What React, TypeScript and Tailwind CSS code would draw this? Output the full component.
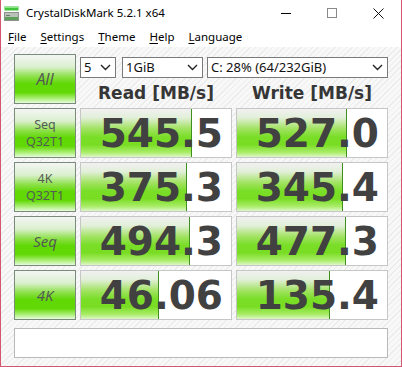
import React from "react";

const rows = [
  { top: "Seq", bottom: "Q32T1", read: "545.5", readFill: 111, write: "527.0", writeFill: 110 },
  { top: "4K", bottom: "Q32T1", read: "375.3", readFill: 106, write: "345.4", writeFill: 106 },
  { top: "Seq", bottom: "", read: "494.3", readFill: 109, write: "477.3", writeFill: 109 },
  { top: "4K", bottom: "", read: "46.06", readFill: 78, write: "135.4", writeFill: 93 },
];

const ui = "font-['Noto_Sans',sans-serif]";

function Chevron() {
  return (
    <svg width="11" height="7" viewBox="0 0 11 7" className="shrink-0">
      <polyline points="1,1 5.5,5.5 10,1" fill="none" stroke="#222" strokeWidth="1.4" />
    </svg>
  );
}

function Select({ label, width }: { label: string; width: string }) {
  return (
    <div
      className={`${width} h-[21px] bg-white border border-[#7a7a7a] flex items-center justify-between pl-[3px] pr-[4px] text-[13px] text-[#111] ${ui}`}
    >
      <span className="leading-none">{label}</span>
      <Chevron />
    </div>
  );
}

function LabelButton({ top, bottom }: { top: string; bottom: string }) {
  return (
    <div className="h-[50px] border border-[#7b8b7b] bg-[image:linear-gradient(to_bottom,#f4f5f4_0%,#dbf0cf_25%,#8ce048_45%,#60d804_60%,#62d906_78%,#a8ee70_90%,#e6fbdc_100%)] flex flex-col items-center justify-center text-[#535c53]">
      {bottom ? (
        <>
          <span className={`${ui} text-[12.5px] leading-[17px]`}>{top}</span>
          <span className={`${ui} text-[12.5px] leading-[17px]`}>{bottom}</span>
        </>
      ) : (
        <span className={`${ui} text-[15px] italic leading-none`}>{top}</span>
      )}
    </div>
  );
}

function ValueCell({ value, fill }: { value: string; fill: number }) {
  return (
    <div className="relative h-[50px] bg-white border border-[#c6c6c6] overflow-hidden">
      <div
        className="absolute left-0 top-0 bottom-0 border-r border-[#3f8f1f] bg-[image:linear-gradient(to_bottom,#f1f1f1_0%,#e2efd9_18%,#a4e366_40%,#7ade28_58%,#78dd22_74%,#a8ec66_90%,#ddf7c8_100%)]"
        style={{ width: fill }}
      />
      <div className="relative h-full flex items-center justify-end pr-[8px] font-['DejaVu_Sans',sans-serif] font-bold text-[39px] leading-none text-[#414141]">
        {value}
      </div>
    </div>
  );
}

export default function App() {
  return (
    <div className="w-[402px] h-[367px] bg-white border-l border-r border-b border-[#d4566f] flex flex-col overflow-hidden">
      {/* Title bar */}
      <div className="h-[26px] flex items-center shrink-0">
        <svg width="15" height="15" viewBox="0 0 15 15" className="ml-[3px] mr-[7px]">
          <rect x="0.5" y="0.5" width="14" height="4" fill="#3fc43a" />
          <rect x="0.5" y="0.5" width="14" height="1.5" fill="#8fe38a" />
          <rect x="0.5" y="6.5" width="14" height="8" fill="#b9c1b9" stroke="#8c948c" />
          <rect x="1" y="11" width="13" height="3" fill="#5f9f5c" />
          <rect x="2" y="9" width="4" height="1" fill="#6f786f" />
        </svg>
        <span className={`${ui} text-[11.5px] text-black`}>CrystalDiskMark 5.2.1 x64</span>
        <div className="ml-auto flex h-full">
          <div className="w-[46px] h-full flex items-center justify-center">
            <div className="w-[10px] h-px bg-black" />
          </div>
          <div className="w-[46px] h-full flex items-center justify-center">
            <div className="w-[10px] h-[10px] border border-[#8a8a8a]" />
          </div>
          <div className="w-[46px] h-full flex items-center justify-center">
            <svg width="11" height="11" viewBox="0 0 11 11">
              <path d="M0.5 0.5 L10.5 10.5 M10.5 0.5 L0.5 10.5" stroke="#111" strokeWidth="1" />
            </svg>
          </div>
        </div>
      </div>

      {/* Menu bar */}
      <div className={`h-[21px] flex items-center shrink-0 ${ui} text-[11.5px] text-black`}>
        {["File", "Settings", "Theme", "Help", "Language"].map((m) => (
          <span key={m} className="px-[7px]">
            <span className="underline underline-offset-2">{m[0]}</span>
            {m.slice(1)}
          </span>
        ))}
      </div>

      {/* Client area */}
      <div className="flex-1 pt-[7px] pl-[13px] bg-[image:repeating-linear-gradient(135deg,#ececec_0px,#ececec_1px,#f8f8f8_1px,#f8f8f8_4px)]">
        <div className="grid grid-cols-[62px_152px_152px] gap-[4px]">
          <div className="h-[50px] border border-[#7b8b7b] bg-[image:linear-gradient(to_bottom,#f4f5f4_0%,#dbf0cf_25%,#8ce048_45%,#60d804_60%,#62d906_78%,#a8ee70_90%,#e6fbdc_100%)] flex items-center justify-center">
            <span className={`${ui} text-[16px] italic text-[#535c53]`}>All</span>
          </div>
          <div className="col-span-2 flex flex-col">
            <div className="flex mt-[3px]">
              <Select label="5" width="w-[36px]" />
              <div className="w-[6px]" />
              <Select label="1GiB" width="w-[81px]" />
              <div className="w-[4px]" />
              <Select label="C: 28% (64/232GiB)" width="w-[181px]" />
            </div>
            <div className="grid grid-cols-[152px_152px] gap-[4px] mt-[7px] font-['DejaVu_Sans',sans-serif] font-bold text-[17px] leading-none text-[#363636]">
              <span className="text-center">Read [MB/s]</span>
              <span className="text-center">Write [MB/s]</span>
            </div>
          </div>

          {rows.map((r, i) => (
            <React.Fragment key={i}>
              <LabelButton top={r.top} bottom={r.bottom} />
              <ValueCell value={r.read} fill={r.readFill} />
              <ValueCell value={r.write} fill={r.writeFill} />
            </React.Fragment>
          ))}

          <div className="col-span-3 mt-[4px] h-[30px] bg-white border border-[#b9b9b9]" />
        </div>
      </div>
    </div>
  );
}
